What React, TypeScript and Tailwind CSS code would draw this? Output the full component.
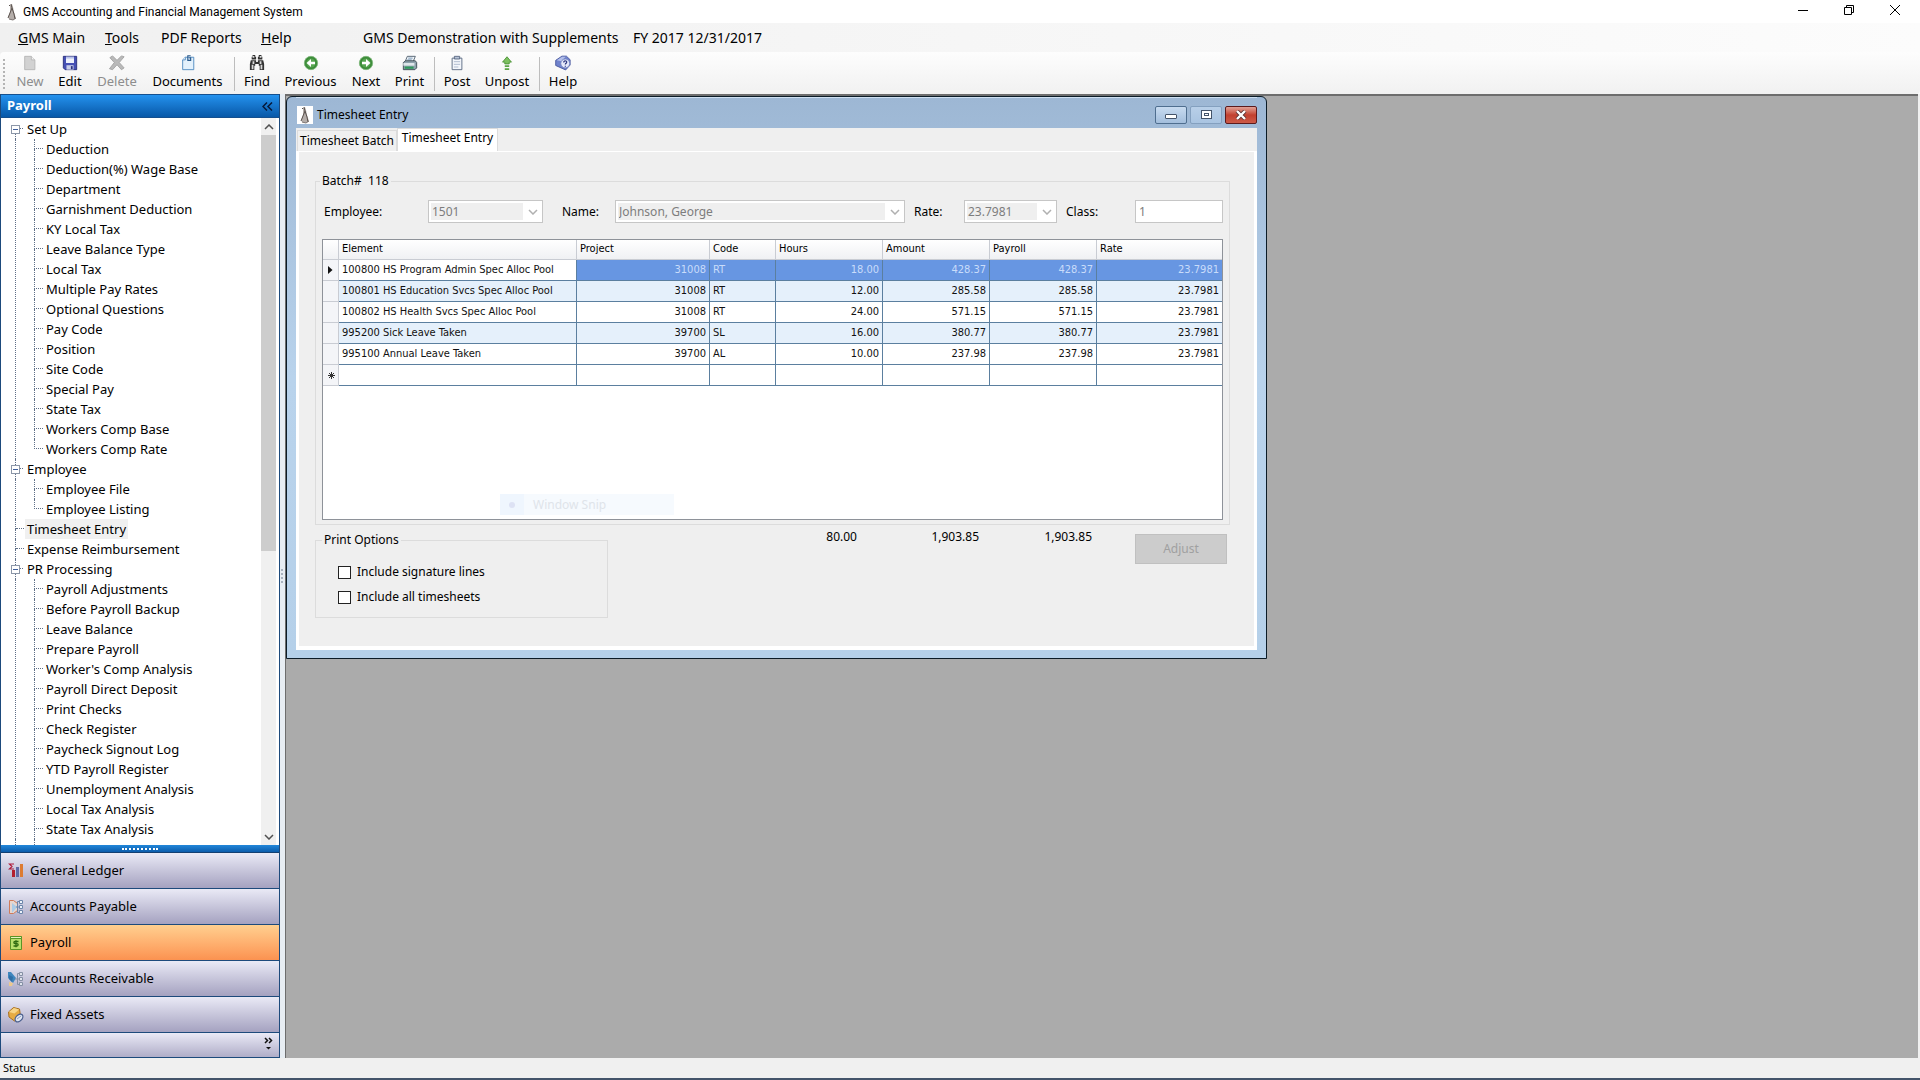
import type { ReactNode } from "react";

type TreeItem = { label: string; children?: string[] };

const tree: TreeItem[] = [
  {
    label: "Set Up",
    children: [
      "Deduction",
      "Deduction(%) Wage Base",
      "Department",
      "Garnishment Deduction",
      "KY Local Tax",
      "Leave Balance Type",
      "Local Tax",
      "Multiple Pay Rates",
      "Optional Questions",
      "Pay Code",
      "Position",
      "Site Code",
      "Special Pay",
      "State Tax",
      "Workers Comp Base",
      "Workers Comp Rate",
    ],
  },
  { label: "Employee", children: ["Employee File", "Employee Listing"] },
  { label: "Timesheet Entry" },
  { label: "Expense Reimbursement" },
  {
    label: "PR Processing",
    children: [
      "Payroll Adjustments",
      "Before Payroll Backup",
      "Leave Balance",
      "Prepare Payroll",
      "Worker's Comp Analysis",
      "Payroll Direct Deposit",
      "Print Checks",
      "Check Register",
      "Paycheck Signout Log",
      "YTD Payroll Register",
      "Unemployment Analysis",
      "Local Tax Analysis",
      "State Tax Analysis",
    ],
  },
];

const timesheet = [
  ["100800 HS Program Admin Spec Alloc Pool", "31008", "RT", "18.00", "428.37", "428.37", "23.7981"],
  ["100801 HS Education Svcs Spec Alloc Pool", "31008", "RT", "12.00", "285.58", "285.58", "23.7981"],
  ["100802 HS Health Svcs Spec Alloc Pool", "31008", "RT", "24.00", "571.15", "571.15", "23.7981"],
  ["995200 Sick Leave Taken", "39700", "SL", "16.00", "380.77", "380.77", "23.7981"],
  ["995100 Annual Leave Taken", "39700", "AL", "10.00", "237.98", "237.98", "23.7981"],
  ["", "", "", "", "", "", ""],
];

const columns = [
  { name: "Element", width: "w-[238px]", align: "text-left" },
  { name: "Project", width: "w-[133px]", align: "text-right" },
  { name: "Code", width: "w-[66px]", align: "text-left" },
  { name: "Hours", width: "w-[107px]", align: "text-right" },
  { name: "Amount", width: "w-[107px]", align: "text-right" },
  { name: "Payroll", width: "w-[107px]", align: "text-right" },
  { name: "Rate", width: "w-[125px]", align: "text-right" },
];

/* ---------- icons ---------- */

const Logo = () => (
  <svg width="16" height="18" viewBox="0 0 16 18" className="shrink-0">
    <path d="M6 2l2-1 1 3 1 5 2 6-3 2-4-1-1-2 2-5z" fill="#b5aeaa" />
    <path d="M7 1l1 4-2 5-2 5M8 5l2 6 1 5M6 2l-1 1" stroke="#5a524e" fill="none" />
    <path d="M5 16l4 1 3-2" stroke="#7d7572" fill="none" />
  </svg>
);

const NewIcon = () => (
  <svg width="16" height="16" viewBox="0 0 18 18">
    <path d="M3 1.500h7.500l4 4v11h-11.500z" fill="#d2d2d2" stroke="#b5b5b5" />
    <path d="M10.500 1.500v4h4" fill="#f2f2f2" stroke="#b5b5b5" />
  </svg>
);

const EditIcon = () => (
  <svg width="16" height="16" viewBox="0 0 18 18">
    <path d="M1.500 1.500h15v15h-13l-2-2z" fill="#4650b4" stroke="#262c78" />
    <path d="M4.500 2h9v7h-9z" fill="#eef1fb" />
    <path d="M4.500 2h9v2h-9z" fill="#b9c2ea" />
    <path d="M5 11.500h8v5h-8z" fill="#c9cee8" />
    <path d="M10 12.500h2v3.500h-2z" fill="#2a307e" />
  </svg>
);

const DeleteIcon = () => (
  <svg width="16" height="16" viewBox="0 0 18 18">
    <path d="M1 3l3-2 5 5 5-5 3 1-5.500 6.500 5.500 6-3 2-5-5.500-5 5.500-3.500-1 5.500-7z" fill="#b9b9b9" stroke="#a2a2a2" />
  </svg>
);

const DocumentsIcon = () => (
  <svg width="16" height="16" viewBox="0 0 18 18">
    <path d="M3 5.500l3-3h9.500v14h-12.500z" fill="#e3f1fc" stroke="#4a86bd" />
    <path d="M3 5.500h3v-3" fill="#fff" stroke="#4a86bd" />
    <path d="M12 .8h-3.200v5.200h3.200v-2.800h-1.500" fill="none" stroke="#2a5a8c" strokeWidth="1.300" />
  </svg>
);

const FindIcon = () => (
  <svg width="16" height="16" viewBox="0 0 18 18" fill="#333">
    <path d="M4 0h3v2h1v3h-5v-3h1zM11 0h3v2h1v3h-5v-3h1z" />
    <path d="M2 6h6v2h2v-2h6l1 4v7h-5v-5h-1v-2h-4v2h-1v5h-5v-7z" />
    <path d="M3 11h2v5h-2zM13 11h2v5h-2zM4 7h2v3h-2zM12 7h2v3h-2z" fill="#d9d9d9" />
    <path d="M4 1h2v2h-2zM12 1h2v2h-2z" fill="#ddd" />
  </svg>
);

const ArrowIcon = ({ next }: { next?: boolean }) => (
  <svg width="16" height="16" viewBox="0 0 18 18" className={next ? "rotate-180" : ""}>
    <circle cx="9" cy="9" r="7.500" fill="#3d8c3a" stroke="#7db77a" />
    <circle cx="9" cy="9" r="5" fill="#57a651" />
    <path d="M4 9l5-4.500v3h4.500v3h-4.500v3z" fill="#fff" />
  </svg>
);

const PrintIcon = () => (
  <svg width="16" height="16" viewBox="0 0 18 18">
    <path d="M6 1.500h9l-2.500 6h-9z" fill="#f4f8fb" stroke="#4a5a6a" />
    <path d="M7 3.500h5M6 5.500h5" stroke="#6f8fb0" />
    <path d="M1.500 8.500l2.500-2h11l1.500 2v6l-2 2h-13z" fill="#8fa3ad" stroke="#39474f" />
    <path d="M1.500 9h12.500v3h-12.500z" fill="#dfe6ea" />
    <path d="M3 13h10v2.500h-10z" fill="#2f9a5c" />
  </svg>
);

const PostIcon = () => (
  <svg width="16" height="16" viewBox="0 0 18 18">
    <path d="M3.500 3.500h11v13h-11z" fill="#f3f6fb" stroke="#56657e" />
    <path d="M6 1.500h6v3h-6z" fill="#b6c2d6" stroke="#56657e" />
    <path d="M5.500 7.500h7M5.500 10.500h7M5.500 13.500h5" stroke="#a9b6cb" />
  </svg>
);

const UnpostIcon = () => (
  <svg width="16" height="16" viewBox="0 0 18 18">
    <path d="M9 2l5 6h-2.500v2h-5v-2h-2.500z" fill="#7cc05f" stroke="#4a9136" />
    <path d="M6.500 11.500h5v2h-5zM6.500 15h5v2h-5z" fill="#5ba445" />
  </svg>
);

const HelpIcon = () => (
  <svg width="16" height="16" viewBox="0 0 18 18">
    <path d="M.8 6l7-4.700h5l4.200 4v6l-5 5.500-11.200-5z" fill="#6f82cc" stroke="#46569c" />
    <path d="M2 6l6-4h4l-5 5z" fill="#b3bfea" />
    <circle cx="11.500" cy="9.500" r="5" fill="#e6eafa" stroke="#7484c0" />
    <path d="M9.800 8.300c0-2.400 3.600-2.200 3.400-.2-.1 1.200-1.600 1.300-1.600 2.700M11.600 12v1.300" fill="none" stroke="#27327c" strokeWidth="1.300" />
  </svg>
);

const LedgerIcon = () => (
  <svg width="16" height="16" viewBox="0 0 16 16">
    <path d="M6 1h-4.500l2.500 2.500-2.500 2.500h4.500" fill="none" stroke="#b01c3c" strokeWidth="1.200" />
    <path d="M4 7h3v7h-3z" fill="#b3202f" />
    <path d="M8 4h3v10h-3z" fill="#5f6aa6" />
    <path d="M12 1h3v13h-3z" fill="#dd7c31" />
  </svg>
);

const PayableIcon = () => (
  <svg width="16" height="16" viewBox="0 0 16 16">
    <path d="M1.500 1.500h4l4 3v7l-4 3h-4z" fill="#e6d6cf" stroke="#cf7b5a" />
    <path d="M4 4l5 4-5 6z" fill="#a9cbe8" />
    <path d="M8 8h3M9.500 2.500v11M9.500 2.500h2M9.500 13.500h2" stroke="#6c86ab" />
    <path d="M11.500 1.500h3v3h-3zM11.500 6.500h3v3h-3zM11.500 11.500h3v3h-3z" fill="#eef3fa" stroke="#6c86ab" />
  </svg>
);

const PayrollIcon = () => (
  <svg width="16" height="16" viewBox="0 0 16 16">
    <path d="M2.500 1.500h11v13h-11z" fill="#b9df6e" stroke="#5a9427" />
    <path d="M2.500 1.500h11v2h-11z" fill="#e4f4bd" stroke="#5a9427" />
    <path d="M10.500 6.500h-3.500c-1.500 0-1.500 2.200 0 2.200h2c1.500 0 1.500 2.300 0 2.300h-3.500M8 5.300v7" fill="none" stroke="#2f6b12" strokeWidth="1.300" />
  </svg>
);

const ReceivableIcon = () => (
  <svg width="16" height="16" viewBox="0 0 16 16">
    <path d="M0 1h3l5 6-3 5-5-5z" fill="#3f86bd" />
    <path d="M1 4l4 2-1 5-3-3z" fill="#2f6ea6" />
    <path d="M1 11l4 1-1 3h-3z" fill="#ecc98e" />
    <path d="M7 8h4M9.500 2.500v11M9.500 2.500h2M9.500 13.500h2" stroke="#8590a5" />
    <path d="M11.500 1.500h3v3h-3zM11.500 6.500h3v3h-3zM11.500 11.500h3v3h-3z" fill="#dfe3ec" stroke="#8590a5" />
  </svg>
);

const AssetsIcon = () => (
  <svg width="16" height="16" viewBox="0 0 16 16">
    <path d="M.5 5l5-4.500 6 1.500 1 7-6 5-5.500-4z" fill="#e5ab43" stroke="#a87021" />
    <path d="M1 5l5-4 5 1.500-4.500 4z" fill="#f7d588" />
    <ellipse cx="11" cy="11" rx="4.500" ry="3" transform="rotate(-45 11 11)" fill="#dfe6f2" stroke="#4c618f" strokeWidth="1.300" />
    <path d="M9 12l4-3" stroke="#8fa0c2" />
  </svg>
);

const Chevron = ({ up, className = "" }: { up?: boolean; className?: string }) => (
  <svg width="10" height="6" viewBox="0 0 10 6" className={className}>
    <path d={up ? "M1 5l4-4 4 4" : "M1 1l4 4 4-4"} fill="none" stroke="currentColor" strokeWidth="1.500" />
  </svg>
);

/* ---------- top bars ---------- */

const TitleBar = () => (
  <header className="flex h-[23px] items-center bg-white pl-1">
    <Logo />
    <h1 className="flex-1 pl-[3px] font-[Roboto,sans-serif] text-xs">
      GMS Accounting and Financial Management System
    </h1>
    <div className="flex h-full items-start pr-[2px]">
      <button aria-label="Minimize" className="flex h-5 w-[46px] items-center justify-center">
        <svg width="12" height="12" viewBox="0 0 12 12"><path d="M1 6.500h10" stroke="#000" /></svg>
      </button>
      <button aria-label="Restore" className="flex h-5 w-[46px] items-center justify-center">
        <svg width="12" height="12" viewBox="0 0 12 12" fill="none" stroke="#000">
          <path d="M1.500 3.500h7v7h-7zM3.500 3.500v-2h7v7h-2" />
        </svg>
      </button>
      <button aria-label="Close" className="flex h-5 w-[46px] items-center justify-center">
        <svg width="12" height="12" viewBox="0 0 12 12"><path d="M1 1l10 10M11 1l-10 10" stroke="#000" /></svg>
      </button>
    </div>
  </header>
);

const MenuBar = () => (
  <nav className="flex h-[29px] items-center bg-linear-to-r from-[#f0f0f0] to-[#fcfcfc] pl-[18px] text-sm">
    <button className="w-[87px] text-left"><u>G</u>MS Main</button>
    <button className="w-[56px] text-left"><u>T</u>ools</button>
    <button className="w-[100px] text-left">PDF Reports</button>
    <button className="w-[102px] text-left"><u>H</u>elp</button>
    <span className="w-[270px]">GMS Demonstration with Supplements</span>
    <span>FY 2017 12/31/2017</span>
  </nav>
);

type ToolProps = { label: string; icon: ReactNode; width: string; disabled?: boolean };

const Tool = ({ label, icon, width, disabled }: ToolProps) => (
  <button
    disabled={disabled}
    className={`flex shrink-0 flex-col items-center ${width} ${disabled ? "text-[#8d8d8d]" : "text-black"}`}
  >
    {icon}
    <span className="leading-5">{label}</span>
  </button>
);

const Divider = () => <span className="my-[2px] w-px bg-[#bdbdbd]" />;

const ToolBar = () => (
  <div className="bg-linear-to-r from-[#f0f0f0] to-[#fcfcfc]">
    <div className="flex h-[42px] items-stretch rounded bg-linear-to-b from-[#fdfdfd] to-[#f1f1f1] pb-[1px] pl-[3px] pt-[3px] text-[13px]">
      <span className="my-1 mr-2 w-0 border-l-2 border-dotted border-[#b4b4b4]" />
      <Tool label="New" icon={<NewIcon />} width="w-[34px]" disabled />
      <Tool label="Edit" icon={<EditIcon />} width="w-[46px]" />
      <Tool label="Delete" icon={<DeleteIcon />} width="w-[48px]" disabled />
      <Tool label="Documents" icon={<DocumentsIcon />} width="w-[93px]" />
      <Divider />
      <Tool label="Find" icon={<FindIcon />} width="w-[44px]" />
      <Tool label="Previous" icon={<ArrowIcon />} width="w-[63px]" />
      <Tool label="Next" icon={<ArrowIcon next />} width="w-[48px]" />
      <Tool label="Print" icon={<PrintIcon />} width="w-[39px]" />
      <span className="w-[5px]" />
      <Divider />
      <Tool label="Post" icon={<PostIcon />} width="w-[44px]" />
      <Tool label="Unpost" icon={<UnpostIcon />} width="w-[56px]" />
      <span className="w-[4px]" />
      <Divider />
      <Tool label="Help" icon={<HelpIcon />} width="w-[46px]" />
    </div>
  </div>
);

/* ---------- sidebar ---------- */

const ExpandBox = () => (
  <button aria-label="Collapse" className="flex size-[9px] shrink-0 items-center justify-center border border-[#8c97a8] bg-white">
    <span className="h-px w-[5px] bg-[#3f5f9c]" />
  </button>
);

const TreeNode = ({ item, first }: { item: TreeItem; first: boolean }) => (
  <li>
    <div className="flex h-5">
      <div className="flex w-[9px] flex-col items-center">
        <span className={`flex-1 border-l border-dotted ${first ? "border-transparent" : "border-[#5f6f87]"}`} />
        {item.children && <ExpandBox />}
        <span className="flex-1 border-l border-dotted border-[#5f6f87]" />
      </div>
      <span className={`h-[10px] border-b border-dotted border-[#5f6f87] ${item.children ? "mr-[2px] w-[3px]" : "-ml-1 mr-px w-2"}`} />
      <a href="#" className={`px-[2px] leading-5 ${item.label === "Timesheet Entry" ? "bg-[#f0f0f0]" : ""}`}>
        {item.label}
      </a>
    </div>
    {item.children && (
      <ul className="ml-1 border-l border-dotted border-[#5f6f87] pl-[18px]">
        {item.children.map((child, i) => (
          <li key={child} className="flex h-5">
            <div className="mr-[3px] flex w-[9px] flex-col">
              <span className="h-[10px] border-b border-l border-dotted border-[#5f6f87]" />
              <span
                className={`flex-1 border-l border-dotted ${
                  i === item.children!.length - 1 && item.label !== "PR Processing" ? "border-transparent" : "border-[#5f6f87]"
                }`}
              />
            </div>
            <a href="#" className="leading-5">{child}</a>
          </li>
        ))}
      </ul>
    )}
  </li>
);

const modules = [
  { name: "General Ledger", icon: <LedgerIcon /> },
  { name: "Accounts Payable", icon: <PayableIcon /> },
  { name: "Payroll", icon: <PayrollIcon /> },
  { name: "Accounts Receivable", icon: <ReceivableIcon /> },
  { name: "Fixed Assets", icon: <AssetsIcon /> },
];

const Sidebar = () => (
  <aside className="flex w-[280px] shrink-0 flex-col border-x border-[#1d4a7c] text-[13px]">
    <div className="flex h-[24px] shrink-0 items-center justify-between border-b border-t border-[#15508f] bg-linear-to-b from-[#2492ee] to-[#0858a8] pl-[6px] pr-[6px]">
      <h2 className="text-[13px] font-bold text-white">Payroll</h2>
      <button aria-label="Collapse panel" className="text-[#06183a]">
        <svg width="11" height="9" viewBox="0 0 11 9" fill="none" stroke="currentColor" strokeWidth="1.500">
          <path d="M5 .5l-4 4 4 4M10 .5l-4 4 4 4" />
        </svg>
      </button>
    </div>
    <div className="flex min-h-0 flex-1 bg-white">
      <div className="flex min-h-0 flex-1 flex-col overflow-hidden pl-[10px] pt-[1px]">
        <ul>
          {tree.map((item, i) => (
            <TreeNode key={item.label} item={item} first={i === 0} />
          ))}
        </ul>
        <div className="ml-1 flex-1 border-l border-dotted border-[#5f6f87] pl-[18px]">
          <div className="h-full border-l border-dotted border-[#5f6f87]" />
        </div>
      </div>
      <div className="mr-[3px] flex w-[15px] flex-col items-center bg-[#f0f0f0] text-[#505050]">
        <button aria-label="Scroll up" className="flex h-[17px] items-center"><Chevron up /></button>
        <div className="flex w-full flex-1 flex-col">
          <div className="h-[60%] bg-[#cdcdcd]" />
        </div>
        <button aria-label="Scroll down" className="flex h-[17px] items-center"><Chevron /></button>
      </div>
    </div>
    <div className="flex h-[8px] shrink-0 items-center justify-center border-b border-[#123f72] bg-linear-to-b from-[#2287da] to-[#0b5cab]">
      <span className="w-9 border-t-2 border-dotted border-white" />
    </div>
    {modules.map((m) => (
      <button
        key={m.name}
        className={`flex h-9 shrink-0 items-center gap-[6px] border-b border-[#1d4a7c] bg-linear-to-b pl-[7px] ${
          m.name === "Payroll" ? "from-[#ffcf8f] to-[#fb9250]" : "from-[#eaeaf6] to-[#a5a2c0]"
        }`}
      >
        {m.icon}
        {m.name}
      </button>
    ))}
    <div className="flex h-[25px] shrink-0 justify-end border-b border-[#1d4a7c] bg-linear-to-b from-[#eaeaf6] to-[#b0adc8] pr-[6px] pt-1">
      <button aria-label="More modules" className="flex flex-col items-center gap-1">
        <svg width="9" height="13" viewBox="0 0 9 13">
          <path d="M1 1l2.500 2.500-2.500 2.500M5 1l2.500 2.500-2.500 2.500" fill="none" stroke="#111" strokeWidth="1.500" />
          <path d="M2 10h5l-2.500 2.500z" fill="#111" />
        </svg>
      </button>
    </div>
  </aside>
);

/* ---------- timesheet window ---------- */

type PickerProps = { id: string; label: string; value: string; labelWidth: string; width: string };

const Picker = ({ id, label, value, labelWidth, width }: PickerProps) => (
  <>
    <label htmlFor={id} className={labelWidth}>{label}</label>
    <div className={`flex h-[23px] items-center border border-[#c6c6c6] bg-white p-[2px] text-[#7d7d7d] ${width}`}>
      <select id={id} disabled className="h-full min-w-0 flex-1 appearance-none bg-[#efefef] px-[1px] leading-4 opacity-100">
        <option>{value}</option>
      </select>
      <Chevron className="ml-[5px] mr-[2px] text-[#b0b0b0]" />
    </div>
  </>
);

const TimesheetTable = () => (
  <div className="mx-[6px] mb-1 h-[281px] border border-[#8e9299] bg-white">
    <table className="w-full table-fixed border-separate border-spacing-0 font-['DejaVu_Sans_Condensed',sans-serif] text-[11px]">
      <thead>
        <tr className="h-5 bg-linear-to-b from-white to-[#eff0f3]">
          <th className="w-4 border-b border-r border-[#c9ccd3]" />
          {columns.map((c) => (
            <th
              key={c.name}
              className={`border-b border-r border-[#c9ccd3] px-[3px] text-left font-normal last:border-r-0 ${c.width}`}
            >
              {c.name}
            </th>
          ))}
        </tr>
      </thead>
      <tbody>
        {timesheet.map((row, r) => (
          <tr key={r} className={`h-[21px] ${r === 1 || r === 3 ? "bg-[#e5f0fb]" : "bg-white"}`}>
            <td className="border-b border-r border-[#c9ccd3] bg-[#f4f5f8] pl-[5px]">
              {r === 0 && (
                <svg width="5" height="8" viewBox="0 0 5 8"><path d="M0 0l4.500 4-4.500 4z" fill="#111" /></svg>
              )}
              {r === 5 && (
                <svg width="7" height="7" viewBox="0 0 7 7">
                  <path d="M3.500 0v7M0 3.500h7M1 1l5 5M6 1l-5 5" stroke="#333" />
                </svg>
              )}
            </td>
            {row.map((cell, i) => (
              <td
                key={i}
                className={`whitespace-nowrap border-b border-r border-[#5b7f9f] px-[3px] last:border-r-0 ${columns[i].align} ${
                  r === 0 && i > 0 ? "bg-[#6796e2] text-[#c9dcfa]" : "text-[#111]"
                }`}
              >
                {cell}
              </td>
            ))}
          </tr>
        ))}
      </tbody>
    </table>
  </div>
);

const TimesheetWindow = () => (
  <section className="relative flex w-[981px] flex-col rounded-t-md border border-[#0b1b26] bg-linear-to-b from-[#9db7d4] via-[#b9d3ec] to-[#b5d0e9] px-[9px] pb-2 text-xs">
    <div className="flex h-[31px] items-center border-t border-[#cfe0f1]">
      <span className="ml-px mt-1 bg-white"><Logo /></span>
      <h2 className="flex-1 pl-1 pt-1">Timesheet Entry</h2>
      <div className="flex gap-[3px] pt-[3px]">
        <button aria-label="Minimize window" className="flex h-[18px] w-8 items-center justify-center rounded-[2px] border border-[#4f6e8f] bg-linear-to-b from-[#c8dbf0] to-[#a3bedc]">
          <span className="mt-1 h-[5px] w-3 rounded-[1px] border border-[#44546a] bg-white" />
        </button>
        <button aria-label="Maximize window" className="flex h-[18px] w-8 items-center justify-center rounded-[2px] border border-[#84a0bf] bg-linear-to-b from-[#b8cfe8] to-[#a9c4e1]">
          <span className="flex h-[9px] w-[11px] items-center justify-center border border-[#44546a] bg-white">
            <span className="h-[3px] w-[5px] border border-[#44546a]" />
          </span>
        </button>
        <button aria-label="Close window" className="flex h-[18px] w-8 items-center justify-center rounded-[2px] border border-[#5c1a1c] bg-linear-to-b from-[#e0a096] via-[#c2402f] to-[#cc5a48]">
          <svg width="12" height="10" viewBox="0 0 12 10">
            <path d="M2 1l8 8M10 1l-8 8" stroke="#5d3434" strokeWidth="4" />
            <path d="M2 1l8 8M10 1l-8 8" stroke="#fff" strokeWidth="2.400" />
          </svg>
        </button>
      </div>
    </div>
    <div className="bg-[#efefef]">
      <div role="tablist" className="flex h-[23px] items-end pl-px">
        <button role="tab" aria-selected="false" className="h-[21px] w-[100px] border border-b-0 border-[#dcdcdc] bg-[#f0f0f0] whitespace-nowrap">
          Timesheet Batch
        </button>
        <button role="tab" aria-selected="true" className="h-[23px] w-[101px] border border-b-0 border-[#dcdcdc] bg-white pb-1 whitespace-nowrap">
          Timesheet Entry
        </button>
      </div>
      <div className="border-x-[3px] border-b-[4px] border-t border-white pb-[28px] pl-4 pr-[27px] pt-[22px]">
        <fieldset className="border border-[#dcdcdc]">
          <legend className="ml-[4px] px-[2px] leading-[14px] whitespace-pre">Batch#  118</legend>
          <div className="mb-4 ml-2 mr-[6px] mt-[12px] flex items-center">
            <Picker id="employee" label="Employee:" value="1501" labelWidth="w-[104px]" width="w-[115px]" />
            <span className="w-[19px]" />
            <Picker id="name" label="Name:" value="Johnson, George" labelWidth="w-[53px]" width="w-[290px]" />
            <span className="w-[9px]" />
            <Picker id="rate" label="Rate:" value="23.7981" labelWidth="w-[50px]" width="w-[93px]" />
            <span className="w-[9px]" />
            <label htmlFor="class" className="w-[69px]">Class:</label>
            <input id="class" readOnly value="1" className="h-[23px] w-0 flex-1 border border-[#c6c6c6] bg-white px-[3px] text-[#7d7d7d]" />
          </div>
          <TimesheetTable />
        </fieldset>
        <div className="flex items-start">
          <fieldset className="mt-2 h-[85px] w-[293px] border border-[#dcdcdc]">
            <legend className="ml-[6px] px-[2px] leading-[14px]">Print Options</legend>
            <div className="ml-[22px] mt-[17px] flex flex-col gap-[9px] leading-4">
              <label className="flex items-center gap-[6px]">
                <input type="checkbox" className="size-[13px] appearance-none border border-[#222] bg-white" />
                Include signature lines
              </label>
              <label className="flex items-center gap-[6px]">
                <input type="checkbox" className="size-[13px] appearance-none border border-[#222] bg-white" />
                Include all timesheets
              </label>
            </div>
          </fieldset>
          <div className="mt-1 flex flex-1 text-right">
            <span className="w-[249px]">80.00</span>
            <span className="w-[122px]">1,903.85</span>
            <span className="w-[113px]">1,903.85</span>
          </div>
          <button disabled className="mt-[9px] h-[30px] w-[92px] border border-[#c0c0c0] bg-[#cccccc] text-[#a0a0a0]">
            Adjust
          </button>
        </div>
      </div>
    </div>
    {/* fading menu entry over the grid */}
    <div className="absolute left-[213px] top-[397px] flex h-[21px] w-[174px] items-center bg-[#f6fafe] text-[#dfe4ea]">
      <span className="mr-[9px] flex h-full w-6 items-center justify-center bg-[#eff6fe]">
        <span className="size-[6px] rounded-full bg-[#dde2f4]" />
      </span>
      Window Snip
    </div>
  </section>
);

const App = () => {
  return (
    <div className="flex h-screen flex-col overflow-hidden bg-[#f0f0f0] font-['Noto_Sans','Open_Sans',sans-serif] text-black">
      <TitleBar />
      <MenuBar />
      <ToolBar />
      <div className="flex min-h-0 flex-1">
        <Sidebar />
        <div className="flex w-[5px] shrink-0 items-center justify-center bg-[#e7edf3]">
          <span className="h-[14px] w-[3px] border-l-2 border-dotted border-[#a9b3bf]" />
        </div>
        <main className="mr-[2px] min-w-0 flex-1 overflow-hidden border-l border-t-2 border-[#6d6d6d] bg-[#ababab]">
          <TimesheetWindow />
        </main>
      </div>
      <footer className="flex h-[22px] shrink-0 items-center border-b-2 border-[#44546a] pl-[3px] text-[11px]">
        Status
      </footer>
    </div>
  );
};

export default App;
